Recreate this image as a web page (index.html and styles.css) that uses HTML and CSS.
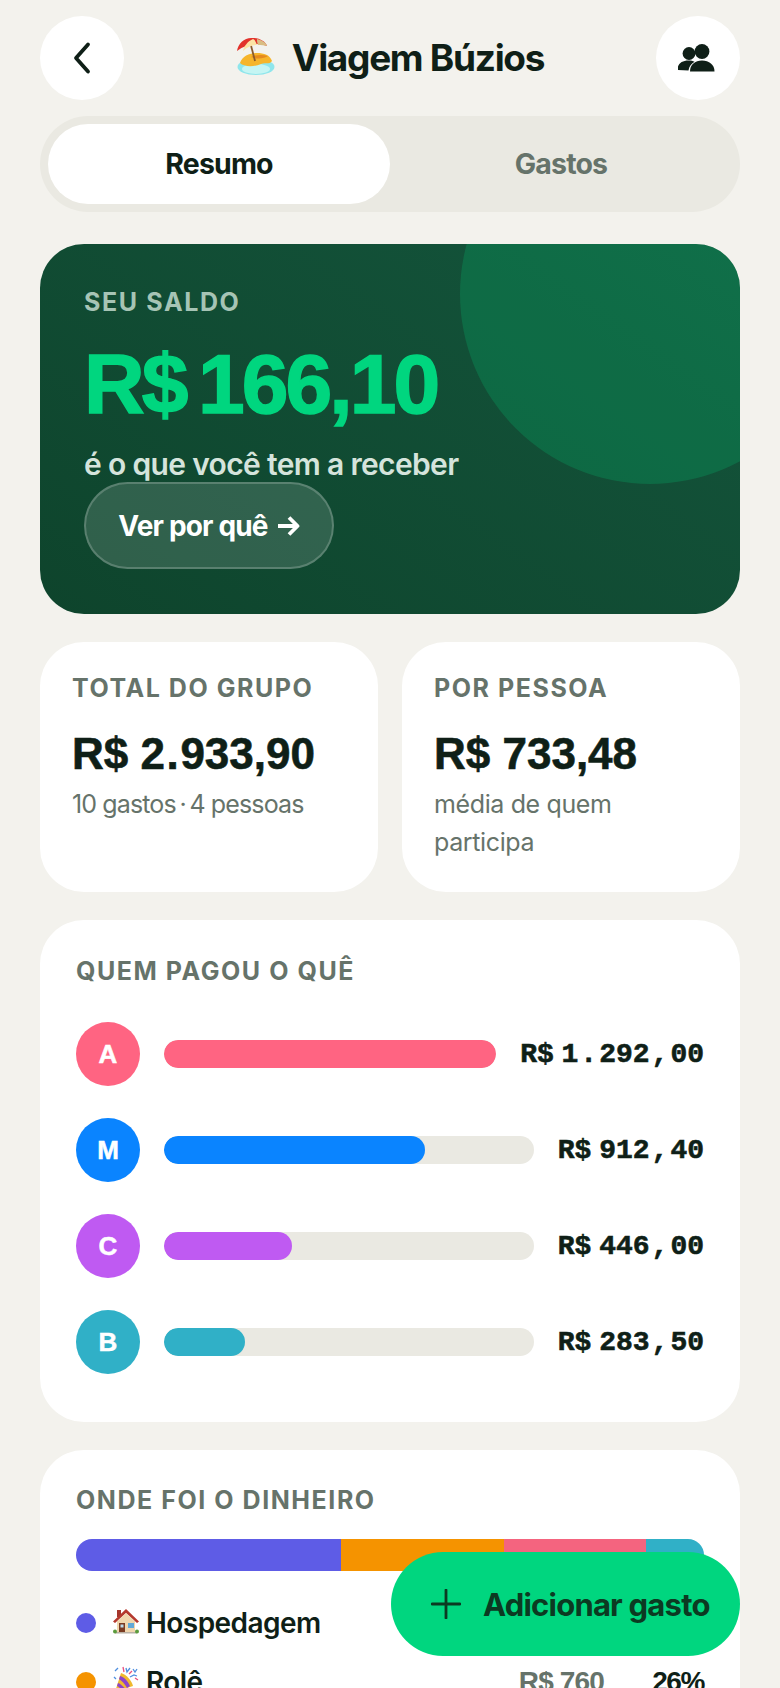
FILE: index.html
```html
<!DOCTYPE html>
<html lang="pt-BR">
<head>
<meta charset="utf-8">
<title>Viagem Búzios</title>
<link rel="stylesheet" href="styles.css">
</head>
<body>
<div class="app">
  <header class="topbar">
    <button class="round-btn" aria-label="Voltar">
      <svg width="28" height="36" viewBox="0 0 28 36"><path d="M20 4.500 8 18l12 13.500" fill="none" stroke="#0f1f17" stroke-width="3.800" stroke-linecap="round" stroke-linejoin="round"/></svg>
    </button>
    <h1 class="title">
      <svg class="title-emoji" width="40" height="40" viewBox="0 0 40 40">
        <ellipse cx="20" cy="31" rx="18.500" ry="8" fill="#8fe6ec"/>
        <ellipse cx="20" cy="33" rx="14" ry="5" fill="#c5f5f3"/>
        <path d="M4 27c2-7 10-10 17-10s13 2 15 8c-3 4-7 1-11 3-7 3-17 3-21-1z" fill="#f6b52b"/>
        <path d="M15 21c3-2 11-3 17-1-4 3-12 3-17 1z" fill="#e58a1e"/>
        <path d="M15 9.500 19 25" stroke="#8a5a2b" stroke-width="1.800"/>
        <path d="M1 15C2 7 9 1 17 2 24 2 30 6 31 10 22 6 10 8 1 15z" fill="#e2322b"/>
        <path d="M7 15c1-5 5-10 10-12 2 1 3 3 4 6-5 0-10 2-14 6z" fill="#fbe3a4"/>
        <path d="M21 3c4 1 9 3 10 7-3-1-6-1-9-1-1-3-1-4-1-6z" fill="#d9bd83"/>
      </svg>
      <span>Viagem Búzios</span>
    </h1>
    <button class="round-btn" aria-label="Participantes">
      <svg width="40" height="32" viewBox="1.500 -2 40 32"><g fill="#0f1f17"><circle cx="12.500" cy="9.500" r="6.400"/><path d="M1 26c0-6 4-9.500 11-9.500 2.500 0 4.500.4 6 1.200-3.500 2-5.500 4.800-6 8.800z"/><circle cx="25.500" cy="7.500" r="7.400"/><path d="M13.500 27.500c0-7 5-11 12-11s12.500 4 12.500 11z"/></g></svg>
    </button>
  </header>

  <nav class="tabs">
    <div class="tab tab-active">Resumo</div>
    <div class="tab">Gastos</div>
  </nav>

  <section class="hero">
    <div class="hero-circle"></div>
    <div class="hero-label">SEU SALDO</div>
    <div class="hero-amount">R$ 166,10</div>
    <div class="hero-sub">é o que você tem a receber</div>
    <button class="hero-btn">Ver por quê <svg width="24" height="24" viewBox="0 0 24 24"><path d="M2 12h19M13 3.500l8.500 8.500-8.500 8.500" fill="none" stroke="#fff" stroke-width="3.800" stroke-linejoin="round"/></svg></button>
  </section>

  <section class="stats">
    <div class="stat">
      <div class="label">TOTAL DO GRUPO</div>
      <div class="stat-value">R$ 2<span class="stat-sep">.</span>933,90</div>
      <div class="stat-sub stat-sub-tight">10 gastos&thinsp;·&thinsp;4 pessoas</div>
    </div>
    <div class="stat">
      <div class="label">POR PESSOA</div>
      <div class="stat-value">R$ 733,48</div>
      <div class="stat-sub">média de quem participa</div>
    </div>
  </section>

  <section class="panel panel-payers">
    <div class="label">QUEM PAGOU O QUÊ</div>
    <ul class="payers">
      <li class="payer">
        <span class="avatar avatar-a">A</span>
        <span class="track"><span class="fill fill-a" style="width:100%"></span></span>
        <span class="payer-value">R$ 1<span class="sep">.</span>292<span class="sep">,</span>00</span>
      </li>
      <li class="payer">
        <span class="avatar avatar-m">M</span>
        <span class="track"><span class="fill fill-m" style="width:70.6%"></span></span>
        <span class="payer-value">R$ 912<span class="sep">,</span>40</span>
      </li>
      <li class="payer">
        <span class="avatar avatar-c">C</span>
        <span class="track"><span class="fill fill-c" style="width:34.5%"></span></span>
        <span class="payer-value">R$ 446<span class="sep">,</span>00</span>
      </li>
      <li class="payer">
        <span class="avatar avatar-b">B</span>
        <span class="track"><span class="fill fill-b" style="width:21.9%"></span></span>
        <span class="payer-value">R$ 283<span class="sep">,</span>50</span>
      </li>
    </ul>
  </section>

  <section class="panel panel-money">
    <div class="label">ONDE FOI O DINHEIRO</div>
    <div class="stack">
      <span class="seg seg-1" style="width:42.2%"></span>
      <span class="seg seg-2" style="width:26%"></span>
      <span class="seg seg-3" style="width:22.6%"></span>
      <span class="seg seg-4" style="width:9.2%"></span>
    </div>
    <ul class="legend">
      <li class="legend-row">
        <span class="dot seg-1"></span>
        <svg class="legend-emoji" width="28" height="28" viewBox="0 0 28 28">
          <rect x="5" y="3" width="4" height="7" fill="#a5362c"/>
          <path d="M5 14h18v12H5z" fill="#f0d6ad"/>
          <path d="M1 14.500 14 2l13 12.500-2 1.500L14 6 3 16z" fill="#b5392e"/>
          <path d="M14 6 5 14.500h18z" fill="#f0d6ad"/>
          <rect x="7" y="16" width="6" height="10" fill="#7a3b22"/>
          <rect x="8.500" y="17.500" width="3" height="3" fill="#b9d9ea"/>
          <rect x="16" y="16" width="6" height="5" fill="#62a9d8"/>
          <rect x="3" y="25" width="22" height="1.500" fill="#b8b0a4"/>
          <circle cx="3" cy="24.500" r="2" fill="#5c9b3c"/><circle cx="25" cy="24.500" r="2" fill="#5c9b3c"/>
        </svg>
        <span class="legend-name">Hospedagem</span>
      </li>
      <li class="legend-row">
        <span class="dot seg-2"></span>
        <svg class="legend-emoji" width="28" height="28" viewBox="0 0 28 28">
          <path d="M3 26 9 7c5 1 11 8 12 13z" fill="#f0b92e"/>
          <path d="M6 17c3 1 6 4 8 7l-3 1c-2-2-4-4-6-5zM8 10c4 1 8 5 10 10l-3 2c-2-4-5-7-8-9z" fill="#8e44c9"/>
          <path d="M3 5l3-3M14 2l1 4 3-4M21 3l2 3 2-3M18 11l4-2 3 1M2 11l2 2" fill="none" stroke="#4f8fe0" stroke-width="1.300"/>
          <path d="M11 1l1 5M17 8l3-3M23 12l3 2" fill="none" stroke="#e8517f" stroke-width="1.300"/>
        </svg>
        <span class="legend-name">Rolê</span>
        <span class="legend-value">R$ 760</span>
        <span class="legend-pct">26%</span>
      </li>
    </ul>
  </section>

  <button class="fab">
    <svg width="30" height="30" viewBox="0 0 30 30"><path d="M15 1v28M1 15h28" stroke="#0c3a22" stroke-width="2.800" stroke-linecap="round"/></svg>
    <span>Adicionar gasto</span>
  </button>
</div>
</body>
</html>
```
FILE: styles.css
```css
* { box-sizing: border-box; }
html, body { margin: 0; padding: 0; height: 100%; overflow: hidden; }
body {
  background: #f3f2ed;
  color: #0f1f17;
  font-family: Inter, "Liberation Sans", sans-serif;
}
button { font-family: inherit; border: 0; padding: 0; cursor: pointer; }
ul { list-style: none; margin: 0; padding: 0; }

.app { position: relative; height: 1688px; overflow: hidden; padding: 16px 40px 0; }

.topbar { display: flex; align-items: center; justify-content: space-between; height: 84px; }
.round-btn {
  width: 84px; height: 84px; border-radius: 50%; background: #fff;
  display: flex; align-items: center; justify-content: center;
}
.title { display: flex; align-items: center; gap: 16px; margin: 0 0 2px; font-size: 37px; font-weight: 700; letter-spacing: -0.035em; }
.title-emoji { margin-top: -2px; }

.tabs {
  display: flex; height: 96px; margin-top: 16px; padding: 8px;
  background: #eae9e2; border-radius: 48px;
}
.tab {
  flex: 1; display: flex; align-items: center; justify-content: center; padding-bottom: 2px;
  font-size: 28.500px; font-weight: 700; letter-spacing: -0.03em; color: #66736a; border-radius: 40px;
}
.tab-active { background: #fff; color: #0f1f17; }

.hero {
  position: relative; overflow: hidden; height: 370px; margin-top: 32px; padding: 43px 44px 0;
  border-radius: 44px; background: linear-gradient(35deg, #0e442c 0%, #14553c 100%);
}
.hero-circle {
  position: absolute; top: -140px; right: -100px; width: 380px; height: 380px;
  border-radius: 50%; background: rgba(0,214,127,.2);
}
.hero-label, .hero-amount, .hero-sub, .hero-btn { position: relative; }
.hero-label { font-size: 25px; line-height: 30px; font-weight: 700; letter-spacing: 0.065em; color: #a6c4b5; }
.hero-amount {
  margin-top: 21px; font-family: "Liberation Sans", sans-serif; font-size: 84px; line-height: 92px;
  font-weight: 700; letter-spacing: -0.035em; word-spacing: -8px; color: #00d67f; -webkit-text-stroke: 1.500px #00d67f;
}
.hero-sub { margin-top: 16px; font-size: 30px; line-height: 36px; font-weight: 600; letter-spacing: -0.022em; color: #d5e4dc; }
.hero-btn {
  display: flex; align-items: center; gap: 8px; width: 250px; height: 87px; justify-content: center;
  border: 2px solid rgba(255,255,255,.2); border-radius: 44px; background: rgba(255,255,255,.14);
  color: #fff; font-size: 28px; font-weight: 700; letter-spacing: -0.03em;
}

.stats { display: grid; grid-template-columns: 1fr 1fr; gap: 24px; margin-top: 28px; }
.stat { height: 250px; padding: 31px 32px; border-radius: 44px; background: #fff; }
.label { font-size: 25px; line-height: 30px; font-weight: 700; letter-spacing: 0.062em; color: #66736a; }
.stat-value {
  margin-top: 25px; font-family: "Liberation Sans", sans-serif; font-size: 44px; line-height: 52px;
  font-weight: 700; -webkit-text-stroke: 0.600px #0f1f17;
}
.stat-sep { padding: 0 1.600px; }
.stat-sub { margin-top: 5px; font-size: 25px; line-height: 38px; color: #66736a; letter-spacing: -0.015em; }
.stat-sub-tight { letter-spacing: -0.035em; }

.panel { margin-top: 28px; padding: 36px; border-radius: 44px; background: #fff; }
.panel-payers { height: 502px; }
.panel-money { padding-top: 35px; }
.payers { display: flex; flex-direction: column; gap: 32px; margin-top: 36px; }
.payer { display: flex; align-items: center; gap: 24px; height: 64px; }
.avatar {
  flex: none; width: 64px; height: 64px; border-radius: 50%;
  display: flex; align-items: center; justify-content: center;
  color: #fff; font-family: "Liberation Sans", sans-serif; font-size: 26px; font-weight: 700; -webkit-text-stroke: 0.500px #fff;
}
.avatar-a, .fill-a { background: #ff6482; }
.avatar-m, .fill-m { background: #0a84ff; }
.avatar-c, .fill-c { background: #bf5af2; }
.avatar-b, .fill-b { background: #30b0c7; }
.track { flex: 1; height: 28px; border-radius: 14px; background: #eae9e2; overflow: hidden; }
.fill { display: block; height: 100%; border-radius: 14px; }
.payer-value {
  font-family: "Liberation Mono", monospace; font-size: 28px; font-weight: 700; word-spacing: -9px;
  white-space: nowrap; -webkit-text-stroke: 0.600px #0f1f17;
}
.sep { padding: 0 2px; }

.stack { display: flex; height: 32px; margin-top: 24px; border-radius: 16px; overflow: hidden; }
.seg { display: block; height: 100%; }
.seg-1 { background: #5e5ce6; }
.seg-2 { background: #f59300; }
.seg-3 { background: #f4647f; }
.seg-4 { background: #30b0c7; }
.legend { display: flex; flex-direction: column; gap: 27px; margin-top: 36px; }
.legend-row { display: flex; align-items: center; height: 32px; font-size: 28px; font-weight: 600; letter-spacing: -0.02em; }
.dot { flex: none; width: 20px; height: 20px; border-radius: 50%; }
.legend-emoji { margin: -4px 6px 0 16px; }
.legend-name { flex: 1; }
.legend-value { color: #66736a; font-family: "Liberation Sans", sans-serif; font-weight: 700; letter-spacing: -0.03em; }
.legend-pct { width: 100px; text-align: right; font-family: "Liberation Sans", sans-serif; font-weight: 700; letter-spacing: -0.05em; }

.fab {
  position: absolute; right: 40px; bottom: 32px; display: flex; align-items: center; gap: 22px;
  width: 349px; height: 104px; padding-left: 40px; border-radius: 52px; background: #00d67f;
  color: #0c3a22; font-size: 31px; font-weight: 700; letter-spacing: -0.025em;
}
```
